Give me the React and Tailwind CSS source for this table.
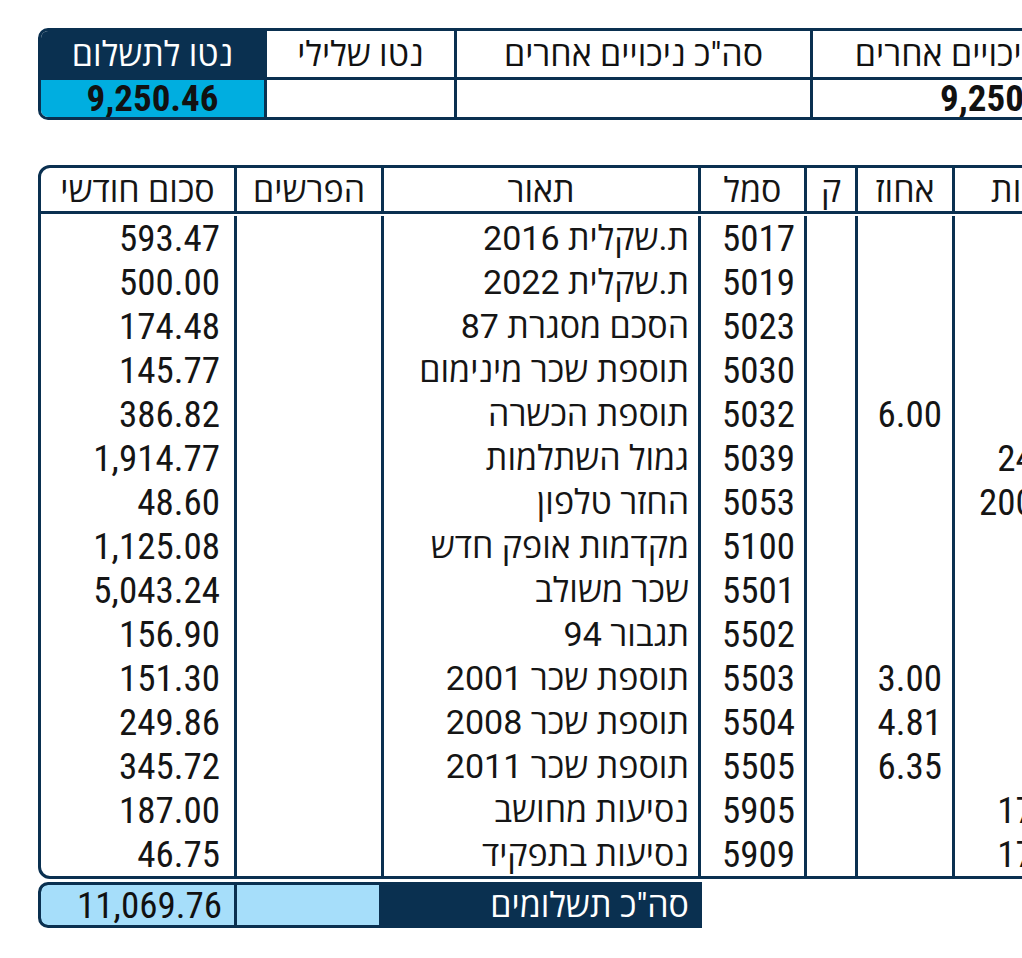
import React from "react";

const NAVY = "border-[#0a3050]";
// Hebrew falls back to a different family than Roboto, so it gets its own size/width
const HEB = "text-[34px] font-stretch-[96%]";

const topCols = [
  { label: "נטו לתשלום", value: "9,250.46", w: "w-[226px]", main: true },
  { label: "נטו שלילי", value: "", w: "w-[190px]" },
  { label: 'סה"כ ניכויים אחרים', value: "", w: "w-[356px]" },
  { label: "נטו לפני ניכויים אחרים", value: "9,250.46", w: "w-[386px]" },
];

const headers = ["סכום חודשי", "הפרשים", "תאור", "סמל", "ק", "אחוז", "כמות"];

const rows = [
  ["593.47", "", "ת.שקלית 2016", "5017", "", "", ""],
  ["500.00", "", "ת.שקלית 2022", "5019", "", "", ""],
  ["174.48", "", "הסכם מסגרת 87", "5023", "", "", ""],
  ["145.77", "", "תוספת שכר מינימום", "5030", "", "", ""],
  ["386.82", "", "תוספת הכשרה", "5032", "", "6.00", ""],
  ["1,914.77", "", "גמול השתלמות", "5039", "", "", "24.00"],
  ["48.60", "", "החזר טלפון", "5053", "", "", "200.00"],
  ["1,125.08", "", "מקדמות אופק חדש", "5100", "", "", ""],
  ["5,043.24", "", "שכר משולב", "5501", "", "", ""],
  ["156.90", "", "תגבור 94", "5502", "", "", ""],
  ["151.30", "", "תוספת שכר 2001", "5503", "", "3.00", ""],
  ["249.86", "", "תוספת שכר 2008", "5504", "", "4.81", ""],
  ["345.72", "", "תוספת שכר 2011", "5505", "", "6.35", ""],
  ["187.00", "", "נסיעות מחושב", "5905", "", "", "17.00"],
  ["46.75", "", "נסיעות בתפקיד", "5909", "", "", "17.00"],
];

const grid = "grid grid-cols-[196px_147px_317px_106px_51px_97px_140px]";

// right padding per column (cells are rtl, so text sits on the right)
const pads = ["pr-[14px]", "pr-[9px]", "pr-[9px]", "pr-[9px]", "pr-[9px]", "pr-[10px]", "pr-[15px]"];

const TopTable = () => (
  <div className={`flex w-[1180px] border-[3px] ${NAVY} rounded-l-[10px] overflow-hidden`}>
    {topCols.map((col, i) => (
      <div
        key={i}
        className={`${col.w} shrink-0 flex flex-col ${
          i < topCols.length - 1 ? `border-r-[3px] ${NAVY}` : ""
        }`}
      >
        <div
          dir="rtl"
          className={`h-[46px] flex items-center justify-center ${HEB} ${
            col.main ? "bg-[#0a3050] text-white" : "text-[#111]"
          }`}
        >
          {col.label}
        </div>
        <div
          className={`h-[40px] border-t-[3px] ${NAVY} flex items-center justify-center font-bold text-[#111] ${
            col.main ? "bg-[#00aee0]" : ""
          }`}
        >
          {col.value}
        </div>
      </div>
    ))}
  </div>
);

const PayTable = () => (
  <div className={`w-[1060px] border-[3px] ${NAVY} rounded-l-[12px] overflow-hidden`}>
    <div className={`${grid} h-[46px] border-b-[3px] ${NAVY}`}>
      {headers.map((h, i) => (
        <div
          key={i}
          dir="rtl"
          className={`flex items-center justify-center ${HEB} ${
            i < headers.length - 1 ? `border-r-[3px] ${NAVY}` : ""
          }`}
        >
          {h}
        </div>
      ))}
    </div>
    <div className="pt-[2px]">
      {rows.map((r, ri) => (
        <div key={ri} className={`${grid} h-[44px]`}>
          {r.map((c, ci) => (
            <div
              key={ci}
              dir="rtl"
              className={`flex items-center whitespace-nowrap ${pads[ci]} ${
                ci === 2 ? HEB : ""
              } ${ci < r.length - 1 ? `border-r-[3px] ${NAVY}` : ""}`}
            >
              {c}
            </div>
          ))}
        </div>
      ))}
    </div>
  </div>
);

const TotalRow = () => (
  <div
    className={`mt-[3px] flex w-[664px] h-[46px] gap-[3px] border-[3px] ${NAVY} bg-[#0a3050] rounded-l-[10px] overflow-hidden`}
  >
    <div className="w-[193px] shrink-0 bg-[#a6defa] rounded-l-[7px] flex items-center justify-end pr-[12px] text-[#111]">
      11,069.76
    </div>
    <div className="w-[142px] shrink-0 bg-[#a6defa]" />
    <div dir="rtl" className={`flex-1 flex items-center pr-[10px] text-white ${HEB}`}>
      סה"כ תשלומים
    </div>
  </div>
);

export default function App() {
  return (
    <div
      className="w-[1022px] h-[958px] overflow-hidden bg-white pt-[28px] pl-[38px] text-[37px] font-stretch-[87%] leading-none text-[#151515]"
      style={{ fontFamily: 'Roboto, "Open Sans", "Liberation Sans", sans-serif' }}
    >
      <TopTable />
      <div className="h-[45px]" />
      <PayTable />
      <TotalRow />
    </div>
  );
}
